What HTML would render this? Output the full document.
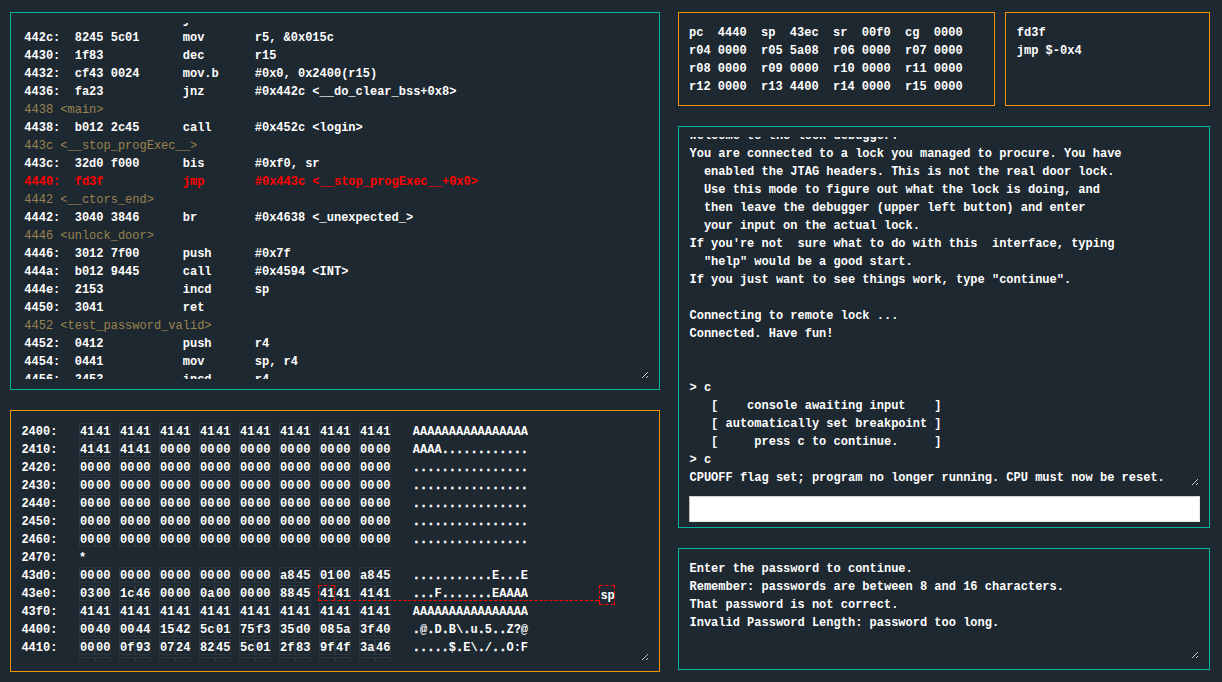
<!DOCTYPE html>
<html lang="en">
<head>
<meta charset="utf-8">
<title>Debugger</title>
<style>
html,body{margin:0;padding:0;}
body{width:1222px;height:682px;overflow:hidden;background:#1e2830;color:#fff;
 font-family:"Liberation Mono","DejaVu Sans Mono",monospace;font-size:12px;font-weight:bold;line-height:18px;position:relative;}
.panel{position:absolute;box-sizing:border-box;border:1px solid #00b39d;}
.gold{border-color:#f39600;}
.clip{position:absolute;overflow:hidden;}
.txt{position:absolute;left:0;}
.ln,.mr{height:18px;white-space:pre;}
.lb{color:#9a834f;font-weight:normal;}
.cur{color:#f00;}
.b{display:inline-block;box-sizing:border-box;width:16px;height:16px;line-height:16px;border:1px solid #2b3640;text-align:center;vertical-align:top;}
.b2{margin-right:0.8px;}

.last{line-height:20px;}
.last .b{line-height:18px;}
.asc{margin-left:-0.6px;}
.d{-webkit-text-stroke:0.45px #fff;}
.grip{position:absolute;display:block;}
#cmd{margin:0;padding:0 4px;outline:none;border-radius:0;font:inherit;color:#000;position:absolute;left:689px;top:496px;width:511px;height:26px;box-sizing:border-box;background:#fff;border:1px solid #e8e8e8;border-left-color:#bbb;border-top-color:#d0d0d0;}
</style>
</head>
<body>
<!-- disassembly -->
<div class="panel" style="left:10px;top:12px;width:650px;height:378px;"></div>
<div class="clip" style="left:21px;top:23px;width:628px;height:356px;">
<div class="txt" style="left:3.3px;top:-12px;">
<div class="ln">442a:  0824           jz        #0x443c &lt;main+0x4&gt;</div>
<div class="ln">442c:  8245 5c01      mov       r5, &amp;0x015c</div>
<div class="ln">4430:  1f83           dec       r15</div>
<div class="ln">4432:  cf43 0024      mov.b     #0x0, 0x2400(r15)</div>
<div class="ln">4436:  fa23           jnz       #0x442c &lt;__do_clear_bss+0x8&gt;</div>
<div class="ln lb">4438 &lt;main&gt;</div>
<div class="ln">4438:  b012 2c45      call      #0x452c &lt;login&gt;</div>
<div class="ln lb">443c &lt;__stop_progExec__&gt;</div>
<div class="ln">443c:  32d0 f000      bis       #0xf0, sr</div>
<div class="ln cur">4440:  fd3f           jmp       #0x443c &lt;__stop_progExec__+0x0&gt;</div>
<div class="ln lb">4442 &lt;__ctors_end&gt;</div>
<div class="ln">4442:  3040 3846      br        #0x4638 &lt;_unexpected_&gt;</div>
<div class="ln lb">4446 &lt;unlock_door&gt;</div>
<div class="ln">4446:  3012 7f00      push      #0x7f</div>
<div class="ln">444a:  b012 9445      call      #0x4594 &lt;INT&gt;</div>
<div class="ln">444e:  2153           incd      sp</div>
<div class="ln">4450:  3041           ret</div>
<div class="ln lb">4452 &lt;test_password_valid&gt;</div>
<div class="ln">4452:  0412           push      r4</div>
<div class="ln">4454:  0441           mov       sp, r4</div>
<div class="ln">4456:  2453           incd      r4</div>
</div>
</div>
<svg class="grip" style="left:640px;top:370px;" width="9" height="9" viewBox="0 0 9 9" shape-rendering="crispEdges"><path d="M2 6.5h1M3 5.5h1M4 4.5h1M5 3.5h1M6 2.5h1M7 1.5h1M6 6.5h1M7 5.5h1" stroke="#0d1216" stroke-width="1" fill="none"/><path d="M2 7.5h1M3 6.5h1M4 5.5h1M5 4.5h1M6 3.5h1M7 2.5h1M6 7.5h1M7 6.5h1" stroke="#d4d4d4" stroke-width="1" fill="none"/></svg>

<!-- memory -->
<div class="panel gold" style="left:10px;top:410px;width:650px;height:262px;"></div>
<div class="clip" style="left:21px;top:421px;width:628px;height:240px;">
<div class="txt" style="left:0.4px;top:2px;">
<div class="mr">2400:   <span class="b">41</span><span class="b b2">41</span> <span class="b">41</span><span class="b b2">41</span> <span class="b">41</span><span class="b b2">41</span> <span class="b">41</span><span class="b b2">41</span> <span class="b">41</span><span class="b b2">41</span> <span class="b">41</span><span class="b b2">41</span> <span class="b">41</span><span class="b b2">41</span> <span class="b">41</span><span class="b b2">41</span>   <span class="asc">AAAAAAAAAAAAAAAA</span></div>
<div class="mr">2410:   <span class="b">41</span><span class="b b2">41</span> <span class="b">41</span><span class="b b2">41</span> <span class="b">00</span><span class="b b2">00</span> <span class="b">00</span><span class="b b2">00</span> <span class="b">00</span><span class="b b2">00</span> <span class="b">00</span><span class="b b2">00</span> <span class="b">00</span><span class="b b2">00</span> <span class="b">00</span><span class="b b2">00</span>   <span class="asc">AAAA<span class="d">............</span></span></div>
<div class="mr">2420:   <span class="b">00</span><span class="b b2">00</span> <span class="b">00</span><span class="b b2">00</span> <span class="b">00</span><span class="b b2">00</span> <span class="b">00</span><span class="b b2">00</span> <span class="b">00</span><span class="b b2">00</span> <span class="b">00</span><span class="b b2">00</span> <span class="b">00</span><span class="b b2">00</span> <span class="b">00</span><span class="b b2">00</span>   <span class="asc"><span class="d">................</span></span></div>
<div class="mr">2430:   <span class="b">00</span><span class="b b2">00</span> <span class="b">00</span><span class="b b2">00</span> <span class="b">00</span><span class="b b2">00</span> <span class="b">00</span><span class="b b2">00</span> <span class="b">00</span><span class="b b2">00</span> <span class="b">00</span><span class="b b2">00</span> <span class="b">00</span><span class="b b2">00</span> <span class="b">00</span><span class="b b2">00</span>   <span class="asc"><span class="d">................</span></span></div>
<div class="mr">2440:   <span class="b">00</span><span class="b b2">00</span> <span class="b">00</span><span class="b b2">00</span> <span class="b">00</span><span class="b b2">00</span> <span class="b">00</span><span class="b b2">00</span> <span class="b">00</span><span class="b b2">00</span> <span class="b">00</span><span class="b b2">00</span> <span class="b">00</span><span class="b b2">00</span> <span class="b">00</span><span class="b b2">00</span>   <span class="asc"><span class="d">................</span></span></div>
<div class="mr">2450:   <span class="b">00</span><span class="b b2">00</span> <span class="b">00</span><span class="b b2">00</span> <span class="b">00</span><span class="b b2">00</span> <span class="b">00</span><span class="b b2">00</span> <span class="b">00</span><span class="b b2">00</span> <span class="b">00</span><span class="b b2">00</span> <span class="b">00</span><span class="b b2">00</span> <span class="b">00</span><span class="b b2">00</span>   <span class="asc"><span class="d">................</span></span></div>
<div class="mr">2460:   <span class="b">00</span><span class="b b2">00</span> <span class="b">00</span><span class="b b2">00</span> <span class="b">00</span><span class="b b2">00</span> <span class="b">00</span><span class="b b2">00</span> <span class="b">00</span><span class="b b2">00</span> <span class="b">00</span><span class="b b2">00</span> <span class="b">00</span><span class="b b2">00</span> <span class="b">00</span><span class="b b2">00</span>   <span class="asc"><span class="d">................</span></span></div>
<div class="mr">2470:   *</div>
<div class="mr">43d0:   <span class="b">00</span><span class="b b2">00</span> <span class="b">00</span><span class="b b2">00</span> <span class="b">00</span><span class="b b2">00</span> <span class="b">00</span><span class="b b2">00</span> <span class="b">00</span><span class="b b2">00</span> <span class="b">a8</span><span class="b b2">45</span> <span class="b">01</span><span class="b b2">00</span> <span class="b">a8</span><span class="b b2">45</span>   <span class="asc"><span class="d">...........</span>E<span class="d">...</span>E</span></div>
<div class="mr">43e0:   <span class="b">03</span><span class="b b2">00</span> <span class="b">1c</span><span class="b b2">46</span> <span class="b">00</span><span class="b b2">00</span> <span class="b">0a</span><span class="b b2">00</span> <span class="b">00</span><span class="b b2">00</span> <span class="b">88</span><span class="b b2">45</span> <span class="b spb">41</span><span class="b b2">41</span> <span class="b">41</span><span class="b b2">41</span>   <span class="asc"><span class="d">...</span>F<span class="d">.......</span>EAAAA</span></div>
<div class="mr">43f0:   <span class="b">41</span><span class="b b2">41</span> <span class="b">41</span><span class="b b2">41</span> <span class="b">41</span><span class="b b2">41</span> <span class="b">41</span><span class="b b2">41</span> <span class="b">41</span><span class="b b2">41</span> <span class="b">41</span><span class="b b2">41</span> <span class="b">41</span><span class="b b2">41</span> <span class="b">41</span><span class="b b2">41</span>   <span class="asc">AAAAAAAAAAAAAAAA</span></div>
<div class="mr">4400:   <span class="b">00</span><span class="b b2">40</span> <span class="b">00</span><span class="b b2">44</span> <span class="b">15</span><span class="b b2">42</span> <span class="b">5c</span><span class="b b2">01</span> <span class="b">75</span><span class="b b2">f3</span> <span class="b">35</span><span class="b b2">d0</span> <span class="b">08</span><span class="b b2">5a</span> <span class="b">3f</span><span class="b b2">40</span>   <span class="asc"><span class="d">.</span>@<span class="d">.</span>D<span class="d">.</span>B\<span class="d">.</span>u<span class="d">.</span>5<span class="d">..</span>Z?@</span></div>
<div class="mr">4410:   <span class="b">00</span><span class="b b2">00</span> <span class="b">0f</span><span class="b b2">93</span> <span class="b">07</span><span class="b b2">24</span> <span class="b">82</span><span class="b b2">45</span> <span class="b">5c</span><span class="b b2">01</span> <span class="b">2f</span><span class="b b2">83</span> <span class="b">9f</span><span class="b b2">4f</span> <span class="b">3a</span><span class="b b2">46</span>   <span class="asc"><span class="d">.....</span>$<span class="d">.</span>E\<span class="d">.</span>/<span class="d">..</span>O:F</span></div>
<div class="mr last">4420:   <span class="b">00</span><span class="b b2">24</span> <span class="b">f9</span><span class="b b2">23</span> <span class="b">3f</span><span class="b b2">40</span> <span class="b">00</span><span class="b b2">00</span> <span class="b">0f</span><span class="b b2">93</span> <span class="b">08</span><span class="b b2">24</span> <span class="b">82</span><span class="b b2">45</span> <span class="b">5c</span><span class="b b2">01</span>   <span class="asc"><span class="d">.</span>$<span class="d">.</span>#?@<span class="d">.....</span>$<span class="d">.</span>E\<span class="d">.</span></span></div>
</div>
<div style="position:absolute;left:579.4px;top:166px;">sp</div>
</div>
<svg class="grip" style="left:640px;top:652px;" width="9" height="9" viewBox="0 0 9 9" shape-rendering="crispEdges"><path d="M2 6.5h1M3 5.5h1M4 4.5h1M5 3.5h1M6 2.5h1M7 1.5h1M6 6.5h1M7 5.5h1" stroke="#0d1216" stroke-width="1" fill="none"/><path d="M2 7.5h1M3 6.5h1M4 5.5h1M5 4.5h1M6 3.5h1M7 2.5h1M6 7.5h1M7 6.5h1" stroke="#d4d4d4" stroke-width="1" fill="none"/></svg>
<svg style="position:absolute;left:0;top:0;" width="1222" height="682" viewBox="0 0 1222 682"><path d="M318 585.5H322M324 585.5H327.5M331 585.5H335M318 600.5H322M324 600.5H327.5M331 600.5H335M318.5 585V589M318.5 591V594.5M318.5 597V601M334.5 585V589M334.5 591V594.5M334.5 597V601M337.8 600.5H341.0M342.84 600.5H346.04M347.88 600.5H351.08M352.92 600.5H356.12M357.96 600.5H361.16M363.0 600.5H366.2M368.04 600.5H371.24M373.08 600.5H376.28M378.12 600.5H381.32M383.16 600.5H386.36M388.2 600.5H391.4M393.24 600.5H396.44M398.28 600.5H401.48M403.32 600.5H406.52M408.36 600.5H411.56M413.4 600.5H416.6M418.44 600.5H421.64M423.48 600.5H426.68M428.52 600.5H431.72M433.56 600.5H436.76M438.6 600.5H441.8M443.64 600.5H446.84M448.68 600.5H451.88M453.72 600.5H456.92M458.76 600.5H461.96M463.8 600.5H467.0M468.84 600.5H472.04M473.88 600.5H477.08M478.92 600.5H482.12M483.96 600.5H487.16M489.0 600.5H492.2M494.04 600.5H497.24M499.08 600.5H502.28M504.12 600.5H507.32M509.16 600.5H512.36M514.2 600.5H517.4M519.24 600.5H522.44M524.28 600.5H527.48M529.32 600.5H532.52M534.36 600.5H537.56M539.4 600.5H542.6M544.44 600.5H547.64M549.48 600.5H552.68M554.52 600.5H557.72M559.56 600.5H562.76M564.6 600.5H567.8M569.64 600.5H572.84M574.68 600.5H577.88M579.72 600.5H582.92M584.76 600.5H587.96M589.8 600.5H593.0M594.9 600.5H599M599 585.5H603M605 585.5H608.5M611 585.5H615M599 604.5H603M605 604.5H608.5M611 604.5H615M599.5 585V589M599.5 591V594M599.5 596V599M599.5 600V605M614.5 585V589M614.5 591V594M614.5 596.4V599M614.5 601V605" stroke="#ff0000" stroke-width="1" fill="none"/></svg>

<!-- registers -->
<div class="panel gold" style="left:678px;top:12px;width:317px;height:94px;"></div>
<div class="txt" style="left:689px;top:24px;">
<div class="ln">pc  4440  sp  43ec  sr  00f0  cg  0000</div>
<div class="ln">r04 0000  r05 5a08  r06 0000  r07 0000</div>
<div class="ln">r08 0000  r09 0000  r10 0000  r11 0000</div>
<div class="ln">r12 0000  r13 4400  r14 0000  r15 0000</div>
</div>

<!-- current instruction -->
<div class="panel gold" style="left:1005px;top:12px;width:205px;height:94px;"></div>
<div class="txt" style="left:1016.8px;top:24px;">
<div class="ln">fd3f</div>
<div class="ln">jmp $-0x4</div>
</div>

<!-- console -->
<div class="panel" style="left:678px;top:126px;width:532px;height:402px;"></div>
<div class="clip" style="left:689px;top:137px;width:510px;height:349px;">
<div class="txt" style="left:0.5px;top:-10px;">
<div class="ln">Welcome to the lock debugger.</div>
<div class="ln">You are connected to a lock you managed to procure. You have</div>
<div class="ln">  enabled the JTAG headers. This is not the real door lock.</div>
<div class="ln">  Use this mode to figure out what the lock is doing, and</div>
<div class="ln">  then leave the debugger (upper left button) and enter</div>
<div class="ln">  your input on the actual lock.</div>
<div class="ln">If you're not  sure what to do with this  interface, typing</div>
<div class="ln">  "help" would be a good start.</div>
<div class="ln">If you just want to see things work, type "continue".</div>
<div class="ln">&nbsp;</div>
<div class="ln">Connecting to remote lock ...</div>
<div class="ln">Connected. Have fun!</div>
<div class="ln">&nbsp;</div>
<div class="ln">&nbsp;</div>
<div class="ln">&gt; c</div>
<div class="ln">   [    console awaiting input    ]</div>
<div class="ln">   [ automatically set breakpoint ]</div>
<div class="ln">   [     press c to continue.     ]</div>
<div class="ln">&gt; c</div>
<div class="ln">CPUOFF flag set; program no longer running. CPU must now be reset.</div>
</div>
</div>
<svg class="grip" style="left:1190px;top:477px;" width="9" height="9" viewBox="0 0 9 9" shape-rendering="crispEdges"><path d="M2 6.5h1M3 5.5h1M4 4.5h1M5 3.5h1M6 2.5h1M7 1.5h1M6 6.5h1M7 5.5h1" stroke="#0d1216" stroke-width="1" fill="none"/><path d="M2 7.5h1M3 6.5h1M4 5.5h1M5 4.5h1M6 3.5h1M7 2.5h1M6 7.5h1M7 6.5h1" stroke="#d4d4d4" stroke-width="1" fill="none"/></svg>
<input id="cmd" type="text" value="" aria-label="debugger command">

<!-- io -->
<div class="panel" style="left:678px;top:548px;width:532px;height:122px;"></div>
<div class="txt" style="left:689.5px;top:560px;">
<div class="ln">Enter the password to continue.</div>
<div class="ln">Remember: passwords are between 8 and 16 characters.</div>
<div class="ln">That password is not correct.</div>
<div class="ln">Invalid Password Length: password too long.</div>
</div>
<svg class="grip" style="left:1190px;top:650px;" width="9" height="9" viewBox="0 0 9 9" shape-rendering="crispEdges"><path d="M2 6.5h1M3 5.5h1M4 4.5h1M5 3.5h1M6 2.5h1M7 1.5h1M6 6.5h1M7 5.5h1" stroke="#0d1216" stroke-width="1" fill="none"/><path d="M2 7.5h1M3 6.5h1M4 5.5h1M5 4.5h1M6 3.5h1M7 2.5h1M6 7.5h1M7 6.5h1" stroke="#d4d4d4" stroke-width="1" fill="none"/></svg>
</body>
</html>
